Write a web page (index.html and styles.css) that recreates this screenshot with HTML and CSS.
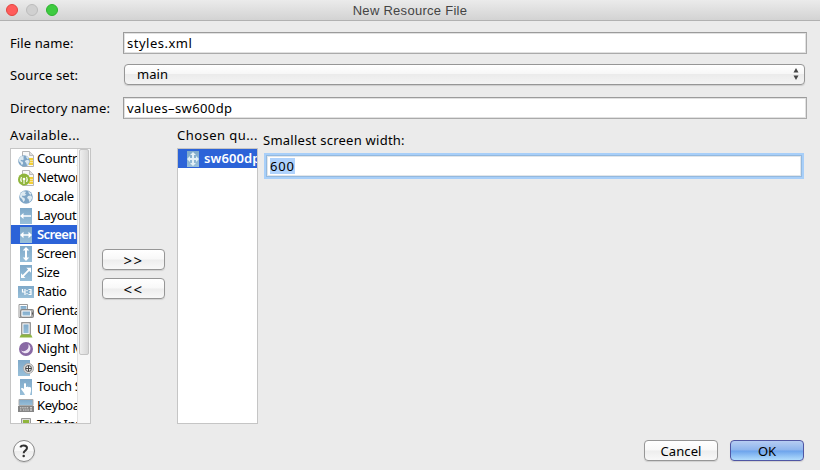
FILE: index.html
```html
<!DOCTYPE html>
<html lang="en">
<head>
<meta charset="utf-8">
<title>New Resource File</title>
<link rel="stylesheet" href="styles.css">
</head>
<body>
<svg width="0" height="0" class="defs">
  <defs>
    <linearGradient id="blue" x1="0" y1="0" x2="0" y2="1"><stop offset="0" stop-color="#7fa9c9"/><stop offset="1" stop-color="#98bfd9"/></linearGradient>
    <symbol id="page" viewBox="0 0 16 16"><path d="M4.500.5h7l4 4v11h-11z" fill="#f8f8f8" stroke="#b5b5b5"/><path d="M11.500.5v4h4" fill="#ddd" stroke="#bbb"/><path d="M11 8h4M11 10.500h4M11 13h4" stroke="#f4cf35" stroke-width="1.800"/></symbol>
    <symbol id="globe" viewBox="0 0 14 14"><circle cx="7" cy="7" r="6.800" fill="#7ea5c6"/><path d="M1.500 3.500 4 1.200l3 .5-1 2 1.500 1L5 6 3.500 5.500 3 7 5.500 8l.5 2-1.500 2L3 9 .8 7zM9 1l3.500 2.500L11.500 5 10 3.500zM9 6l3-.5 1.300 2L12 10.500 10.500 12 9.500 9 8 8z" fill="#dce9f1"/></symbol>
  </defs>
</svg>
<header class="titlebar">
  <div class="lights"><i class="light close"></i><i class="light minimize"></i><i class="light expand"></i></div>
  <h1>New Resource File</h1>
</header>
<main>
  <section class="form">
    <label class="t-file">File name:</label><div class="field"><span class="v-file">styles.xml</span></div>
    <label class="t-source">Source set:</label>
    <div class="select"><span class="v-main">main</span><svg width="6" height="12" viewBox="0 0 6 12"><path d="M3 0 5.500 4.500h-5zM.5 7.500h5L3 12z" fill="#444"/></svg></div>
    <label class="t-dir">Directory name:</label><div class="field"><span class="v-dir">values–sw600dp</span></div>
  </section>
  <section class="chooser">
    <div class="column">
      <h2 class="t-available">Available...</h2>
      <div class="list available">
        <ul>
          <li><svg viewBox="0 0 16 16"><use href="#page" width="16" height="16"/><use href="#globe" x="0" y="4" width="12" height="12"/></svg><span>Country Code</span></li>
          <li><svg viewBox="0 0 16 16"><use href="#page" width="16" height="16"/><circle cx="6" cy="9.500" r="6" fill="#8fb53b"/><path d="M3.500 7q-1.500 2.500 0 5M8.500 7q1.500 2.500 0 5M6 9v5" fill="none" stroke="#f5f9e9" stroke-width="1.200"/><circle cx="6" cy="9" r="1.300" fill="#fff"/></svg><span>Network Code</span></li>
          <li><svg viewBox="0 0 16 16"><use href="#globe" x="1" y="1" width="14" height="14"/></svg><span>Locale</span></li>
          <li><svg viewBox="0 0 16 16"><path d="M2 0h12v16H2z" fill="url(#blue)"/><path d="M2 8 5.500 5v2.200H13v1.600H5.500V11z" fill="#fff"/></svg><span>Layout Direction</span></li>
          <li class="selected"><svg viewBox="0 0 16 16"><path d="M2 0h12v16H2z" fill="url(#blue)"/><path d="M2 8 5.500 4.700v2.500h5V4.700L14 8l-3.500 3.300V8.800h-5v2.500z" fill="#fff"/></svg><span>Screen Width</span></li>
          <li><svg viewBox="0 0 16 16"><path d="M2 0h12v16H2z" fill="url(#blue)"/><path d="M8 1 11.300 4.500H9v7h2.300L8 15l-3.300-3.500H7v-7H4.700z" fill="#fff"/></svg><span>Screen Height</span></li>
          <li><svg viewBox="0 0 16 16"><path d="M2 0h12v16H2z" fill="url(#blue)"/><path d="M13 2.800v5L11.200 6l-5.400 5.400L7.600 13H3V8.300l1.700 1.800 5.400-5.500-1.800-1.800z" fill="#fff"/></svg><span>Size</span></li>
          <li><svg viewBox="0 0 16 16"><path d="M0 2h16v12H0z" fill="url(#blue)"/><path d="M4.500 5v3h3M7 5v6M9 6v1.200M9 9v1.200M10.500 5.500h2.500v5h-2.500M11 8h2" fill="none" stroke="#fff" stroke-width="1.200"/></svg><span>Ratio</span></li>
          <li><svg viewBox="0 0 16 16"><path d="M1 1.500h8.500V8H3v6.500H1z" fill="#fff" stroke="#999"/><path d="M2.500 3h6v4h-6z" fill="url(#blue)"/><rect x="2.500" y="6.500" width="13" height="8" rx="1" fill="#aaa" stroke="#888"/><path d="M4 8h8.500v5H4z" fill="url(#blue)" stroke="#fff"/><path d="M14 9.500h1v2h-1z" fill="#555"/></svg><span>Orientation</span></li>
          <li><svg viewBox="0 0 16 16"><path d="M3.500.5h9v12h-9z" fill="#bbb" stroke="#999"/><path d="M5 2h6v9.500H5z" fill="url(#blue)" stroke="#fff" stroke-width=".8"/><path d="M3 12.500h10l1.500 3h-13z" fill="#8eb441"/></svg><span>UI Mode</span></li>
          <li><svg viewBox="0 0 16 16"><circle cx="8" cy="8" r="7" fill="#8969a4"/><path d="M10 3a5 5 0 1 1-7 6.500 5 5 0 0 0 7-6.500" fill="#eee5f5"/></svg><span>Night Mode</span></li>
          <li><svg viewBox="0 0 16 16"><path d="M0 0h12v16H0z" fill="url(#blue)"/><circle cx="10.500" cy="8.500" r="5" fill="#ddd" stroke="#aaa"/><circle cx="10.500" cy="8.500" r="3" fill="#eee" stroke="#555"/><path d="M10.500 5.500v6M7.500 8.500h6" stroke="#444"/></svg><span>Density</span></li>
          <li><svg viewBox="0 0 16 16"><path d="M2 0h12v16H2z" fill="url(#blue)"/><path d="M6 14 3 10q0-1.500 1.500-1L6 10V5q1-2 2 0v3h1q1-1 1.500.3Q12.500 7.500 13 9v3l-1 4H7z" fill="#fff"/></svg><span>Touch Screen</span></li>
          <li><svg viewBox="0 0 16 16"><path d="M1 1.500h14v6H1z" fill="url(#blue)" stroke="#aaa"/><path d="M0 8h16v6H0z" fill="#858585"/><path d="M2 9.800h9M2 12h2m1 0h6" stroke="#ddd" stroke-dasharray="1.400 .8"/><path d="M12 9.800h2M12 12h2" stroke="#eee"/></svg><span>Keyboard</span></li>
          <li><svg viewBox="0 0 16 16"><path d="M3.500 1.500h9v14h-9z" fill="#ddd" stroke="#999"/><path d="M5 3h6v7H5z" fill="#8fb53b"/></svg><span>Text Input</span></li>
        </ul>
        <div class="scrollbar"><div class="thumb"></div></div>
      </div>
    </div>
    <div class="transfer"><button>&gt;&gt;</button><button>&lt;&lt;</button></div>
    <div class="column">
      <h2 class="t-chosen">Chosen qu...</h2>
      <div class="list chosen"><ul><li class="selected"><svg viewBox="0 0 16 16"><path d="M2 0h12v16H2z" fill="url(#blue)"/><path d="M8 1 11 4H9v3h2V5l3 3-3 3V9H9v3h2l-3 3-3-3h2V9H5v2L2 8l3-3v2h2V4H5z" fill="#e3f0f6"/></svg><span>sw600dp</span></li></ul></div>
    </div>
    <div class="details"><label class="t-smallest">Smallest screen width:</label><div class="field focused"><mark>600</mark></div></div>
  </section>
  <footer>
    <button class="help"><svg width="12" height="14" viewBox="0 0 12 14"><path d="M2.300 3.300Q3 1.500 5.700 1.500 9 1.500 9 4.100q0 1.400-1.700 2.500-1.600 1-1.600 2.600" fill="none" stroke="#333" stroke-width="2"/><circle cx="5.700" cy="12" r="1.250" fill="#333"/></svg></button>
    <button class="cancel">Cancel</button><button class="ok">OK</button>
  </footer>
</main>
</body>
</html>
```
FILE: styles.css
```css
* { box-sizing: border-box; }
body { margin: 0; width: 820px; height: 470px; overflow: hidden; background: #ebebeb; color: #000; font: 13px/18px "Noto Sans", sans-serif; }
.defs { position: absolute; }
h1, h2, ul { margin: 0; padding: 0; font-weight: normal; font-size: 13px; }
.titlebar { display: grid; grid-template-columns: 66px 1fr 66px; height: 21px; background: linear-gradient(#ebebeb, #d3d3d3); border-bottom: 1px solid #b1b1b1; }
.titlebar h1 { font: 13px/21px "Liberation Sans", sans-serif; color: #444; text-align: center; letter-spacing: .28px; }
.lights { display: flex; gap: 8px; padding: 4px 0 0 6px; }
.light { width: 12px; height: 12px; border-radius: 50%; border: 1px solid #e2463f; background: #ff5c5b; }
.minimize { background: #d0d0d0; border-color: #bcbcbc; }
.expand { background: #3ecb40; border-color: #2db32f; }
main { padding: 11px 13px 0 10px; }
.form { display: grid; grid-template-columns: 113px 684px; grid-template-rows: 22px 22px 22px; row-gap: 10.500px; }
.form label { padding-top: 2px; white-space: nowrap; }
.t-file { letter-spacing: .1px; }
.form .t-source { padding-top: 1px; letter-spacing: .12px; }
.t-dir { letter-spacing: .15px; }
.v-file { letter-spacing: .5px; }
.v-main { letter-spacing: .05px; }
.v-dir { letter-spacing: .38px; }
.t-available { letter-spacing: .38px; }
.t-chosen { letter-spacing: .45px; }
.t-smallest { letter-spacing: .25px; }
.field { height: 22px; border: 1px solid #9b9b9b; border-right-color: #aaa; border-bottom-color: #aaa; background: #fff; box-shadow: inset 0 0 0 1px #e1e1e1; padding: 1px 3px; }
.select { display: flex; align-items: center; justify-content: space-between; width: 681px; height: 21px; margin-left: 1px; margin-top: -.5px; padding: 0 5px 1px 12px; border: 1px solid #969696; border-radius: 4px; background: linear-gradient(#fff, #f7f7f7 45%, #ebebeb 50%, #f4f4f4); box-shadow: 0 1px 1px #ccc; }
.chooser { display: flex; height: 298px; margin-top: 7px; }
.column h2 { height: 22px; white-space: nowrap; }
.list { display: flex; width: 81px; height: 276px; border: 1px solid #c5c5c5; background: #fff; overflow: hidden; }
.list ul { flex: 1; min-width: 0; list-style: none; overflow: hidden; }
.list li { display: flex; align-items: center; gap: 3px; height: 19px; padding-left: 7px; line-height: 19px; white-space: nowrap; letter-spacing: -.35px; }
.list svg { flex: none; width: 16px; height: 16px; }
.list .selected { background: #2c63d8; color: #fff; font-weight: 600; letter-spacing: -.6px; }
.list.chosen .selected { letter-spacing: .1px; }
.scrollbar { width: 13px; background: #f7f7f7; border-left: 1px solid #e2e2e2; }
.thumb { height: 206px; margin: 0 1px; border: 1px solid #c4c4c4; border-radius: 2px; background: linear-gradient(90deg, #eee, #d8d8d8); }
.transfer { display: flex; flex-direction: column; gap: 8px; width: 86px; padding: 123px 12px 0 11px; }
button { height: 21px; padding: 0; border: 1px solid #969696; border-radius: 4px; background: linear-gradient(#fff, #f8f8f8 48%, #ededed 52%, #f8f8f8); box-shadow: 0 1px 1px #d0d0d0; color: #000; font: 13px/18px "Noto Sans", sans-serif; }
.transfer button { font-size: 15px; letter-spacing: 1.500px; }
.details { flex: 1; padding: 5px 4px 0 5px; }
.details label { display: block; height: 20px; }
.field.focused { width: 536px; margin: 4px 0 0 3px; border-color: #94b9de; box-shadow: 0 0 0 2px #a8cff9, inset 0 0 0 1px #e2e6ea; }
mark { display: inline-block; height: 16px; margin-top: 1px; line-height: 17px; background: #afd2fc; color: #000; letter-spacing: .8px; }
footer { display: flex; margin-top: 16px; }
.help { display: grid; place-items: center; width: 22px; height: 22px; margin: 0 auto 0 3px; border-radius: 50%; border-color: #888; }
.cancel { width: 74px; margin-right: 12px; letter-spacing: .1px; }
.ok { width: 74px; margin-right: 3px; border-color: #5056a3; background: linear-gradient(#b6cdf2, #8db4ed 48%, #6ca3ec 52%, #b1dcfc); }
```
